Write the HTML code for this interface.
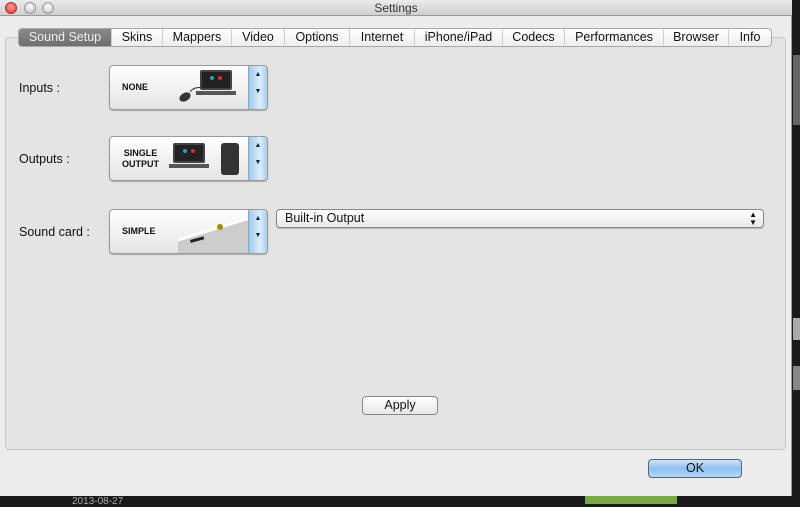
<!DOCTYPE html>
<html><head><meta charset="utf-8"><style>
*{box-sizing:border-box;margin:0;padding:0}
body{width:800px;height:504px;overflow:hidden;background:#1a1a1a;font-family:"Liberation Sans",sans-serif;position:relative}
.abs{position:absolute}
#win{left:0;top:0;width:792px;height:496px;background:#ececec;border-right:1px solid #999}
#title{left:0;top:0;width:792px;height:16px;background:linear-gradient(#ebebeb,#cfcfcf);border-bottom:1px solid #999;text-align:center;font-size:12px;line-height:16px;color:#333}
.dot{top:2px;width:12px;height:12px;border-radius:50%;border:1px solid #999;background:radial-gradient(circle at 50% 35%,#fff,#bbb)}
#panel{left:5px;top:37px;width:781px;height:413px;background:#e4e4e4;border:1px solid #c8c8c8;border-radius:4px}
#tabs{left:18px;top:28px;height:19px;display:flex;border:1px solid #a8a8a8;border-radius:4px;background:linear-gradient(#fff,#ededed);font-size:12.5px;overflow:hidden}
#tabs div{height:17px;line-height:17px;text-align:center;border-left:1px solid #d0d0d0;color:#111}
#tabs div.sel{background:linear-gradient(#8a8a8a,#6e6e6e);color:#eee;border-left:none}
.lbl{font-size:12.5px;color:#111;left:19px}
.sel2{left:109px;width:159px;height:45px;border:1px solid #999;border-radius:4px;background:linear-gradient(#fff,#f2f2f2 50%,#e4e4e4);box-shadow:0 1px 1px rgba(0,0,0,.25);overflow:hidden}
.sel2 .t{position:absolute;left:12px;font-size:9px;font-weight:bold;color:#111;line-height:11px;text-align:center}
.sel2 .sp{position:absolute;right:0;top:0;width:19px;height:100%;background:linear-gradient(90deg,#9fc9ef,#dcedfc 60%,#a9cff1);border-left:1px solid #8aa;font-size:7px;color:#124;text-align:center}
.lap{position:absolute;width:32px;height:20px;background:#222;border:2px solid #444;border-radius:2px}
.lap:before{content:"";position:absolute;left:8px;top:4px;width:4px;height:4px;border-radius:50%;background:#39c}
.lap:after{content:"";position:absolute;left:16px;top:4px;width:4px;height:4px;border-radius:50%;background:#c33}
.btn{border:1px solid #888;border-radius:4px;background:linear-gradient(#fff,#e8e8e8);font-size:12.5px;text-align:center;color:#111}
</style></head><body>
<div class="abs" style="left:793px;top:55px;width:7px;height:70px;background:#666"></div>
<div class="abs" style="left:793px;top:318px;width:7px;height:22px;background:#aaa"></div>
<div class="abs" style="left:793px;top:366px;width:7px;height:24px;background:#888"></div>
<div id="win" class="abs">
<div id="title" class="abs">Settings</div>
<div class="abs dot" style="left:5px;background:radial-gradient(circle at 50% 35%,#f99,#d33);border-color:#a33"></div>
<div class="abs dot" style="left:24px"></div>
<div class="abs dot" style="left:42px"></div>
<div id="panel" class="abs"></div>
<div id="tabs" class="abs">
<div class="sel" style="width:92px">Sound Setup</div><div style="width:51px">Skins</div><div style="width:69px">Mappers</div><div style="width:53px">Video</div><div style="width:65px">Options</div><div style="width:65px">Internet</div><div style="width:88px">iPhone/iPad</div><div style="width:62px">Codecs</div><div style="width:99px">Performances</div><div style="width:65px">Browser</div><div style="width:43px">Info</div>
</div>
<div class="abs lbl" style="top:81px">Inputs :</div>
<div class="abs lbl" style="top:152px">Outputs :</div>
<div class="abs lbl" style="top:225px">Sound card :</div>

<div class="abs sel2" style="top:65px">
<div class="t" style="top:16px">NONE</div>
<div class="lap" style="left:90px;top:4px"></div>
<div class="abs" style="left:86px;top:25px;width:40px;height:4px;background:#555"></div>
<svg class="abs" style="left:66px;top:18px" width="30" height="22"><path d="M28 4 Q18 2 14 8" stroke="#333" fill="none"/><ellipse cx="9" cy="13" rx="6" ry="4" transform="rotate(-30 9 13)" fill="#333"/></svg>
<div class="sp" style="line-height:17px">▲<br>▼</div>
</div>
<div class="abs sel2" style="top:136px">
<div class="t" style="top:11px">SINGLE<br>OUTPUT</div>
<div class="lap" style="left:63px;top:6px"></div>
<div class="abs" style="left:59px;top:27px;width:40px;height:4px;background:#555"></div>
<div class="abs" style="left:111px;top:6px;width:18px;height:32px;background:#333;border-radius:3px"></div>
<div class="sp" style="line-height:17px">▲<br>▼</div>
</div>
<div class="abs sel2" style="top:209px">
<div class="t" style="top:16px">SIMPLE</div>
<svg class="abs" style="left:68px;top:0" width="72" height="45"><path d="M0 30 L72 8 L72 45 L0 45Z" fill="#ccc"/><path d="M0 30 L72 8" stroke="#fff" stroke-width="3"/><circle cx="42" cy="17" r="3" fill="#a80"/><rect x="12" y="30" width="14" height="3" fill="#222" transform="rotate(-15 12 30)"/></svg>
<div class="sp" style="line-height:17px">▲<br>▼</div>
</div>

<div class="abs btn" style="left:276px;top:209px;width:488px;height:19px;text-align:left;padding-left:8px;line-height:17px;box-shadow:0 1px 1px rgba(0,0,0,.2)">Built-in Output<span style="position:absolute;right:6px;top:0;font-size:8px;line-height:8px;padding-top:1px">▲<br>▼</span></div>
<div class="abs btn" style="left:362px;top:396px;width:76px;height:19px;line-height:17px">Apply</div>
<div class="abs btn" style="left:648px;top:459px;width:94px;height:19px;line-height:17px;background:linear-gradient(#cfe5fb,#8fc0f0 50%,#b5d8f7);border-color:#567">OK</div>
</div>
<div class="abs" style="left:72px;top:496px;font-size:10px;color:#aaa">2013-08-27</div>
<div class="abs" style="left:585px;top:496px;width:92px;height:8px;background:#7a4"></div>
</body></html>
